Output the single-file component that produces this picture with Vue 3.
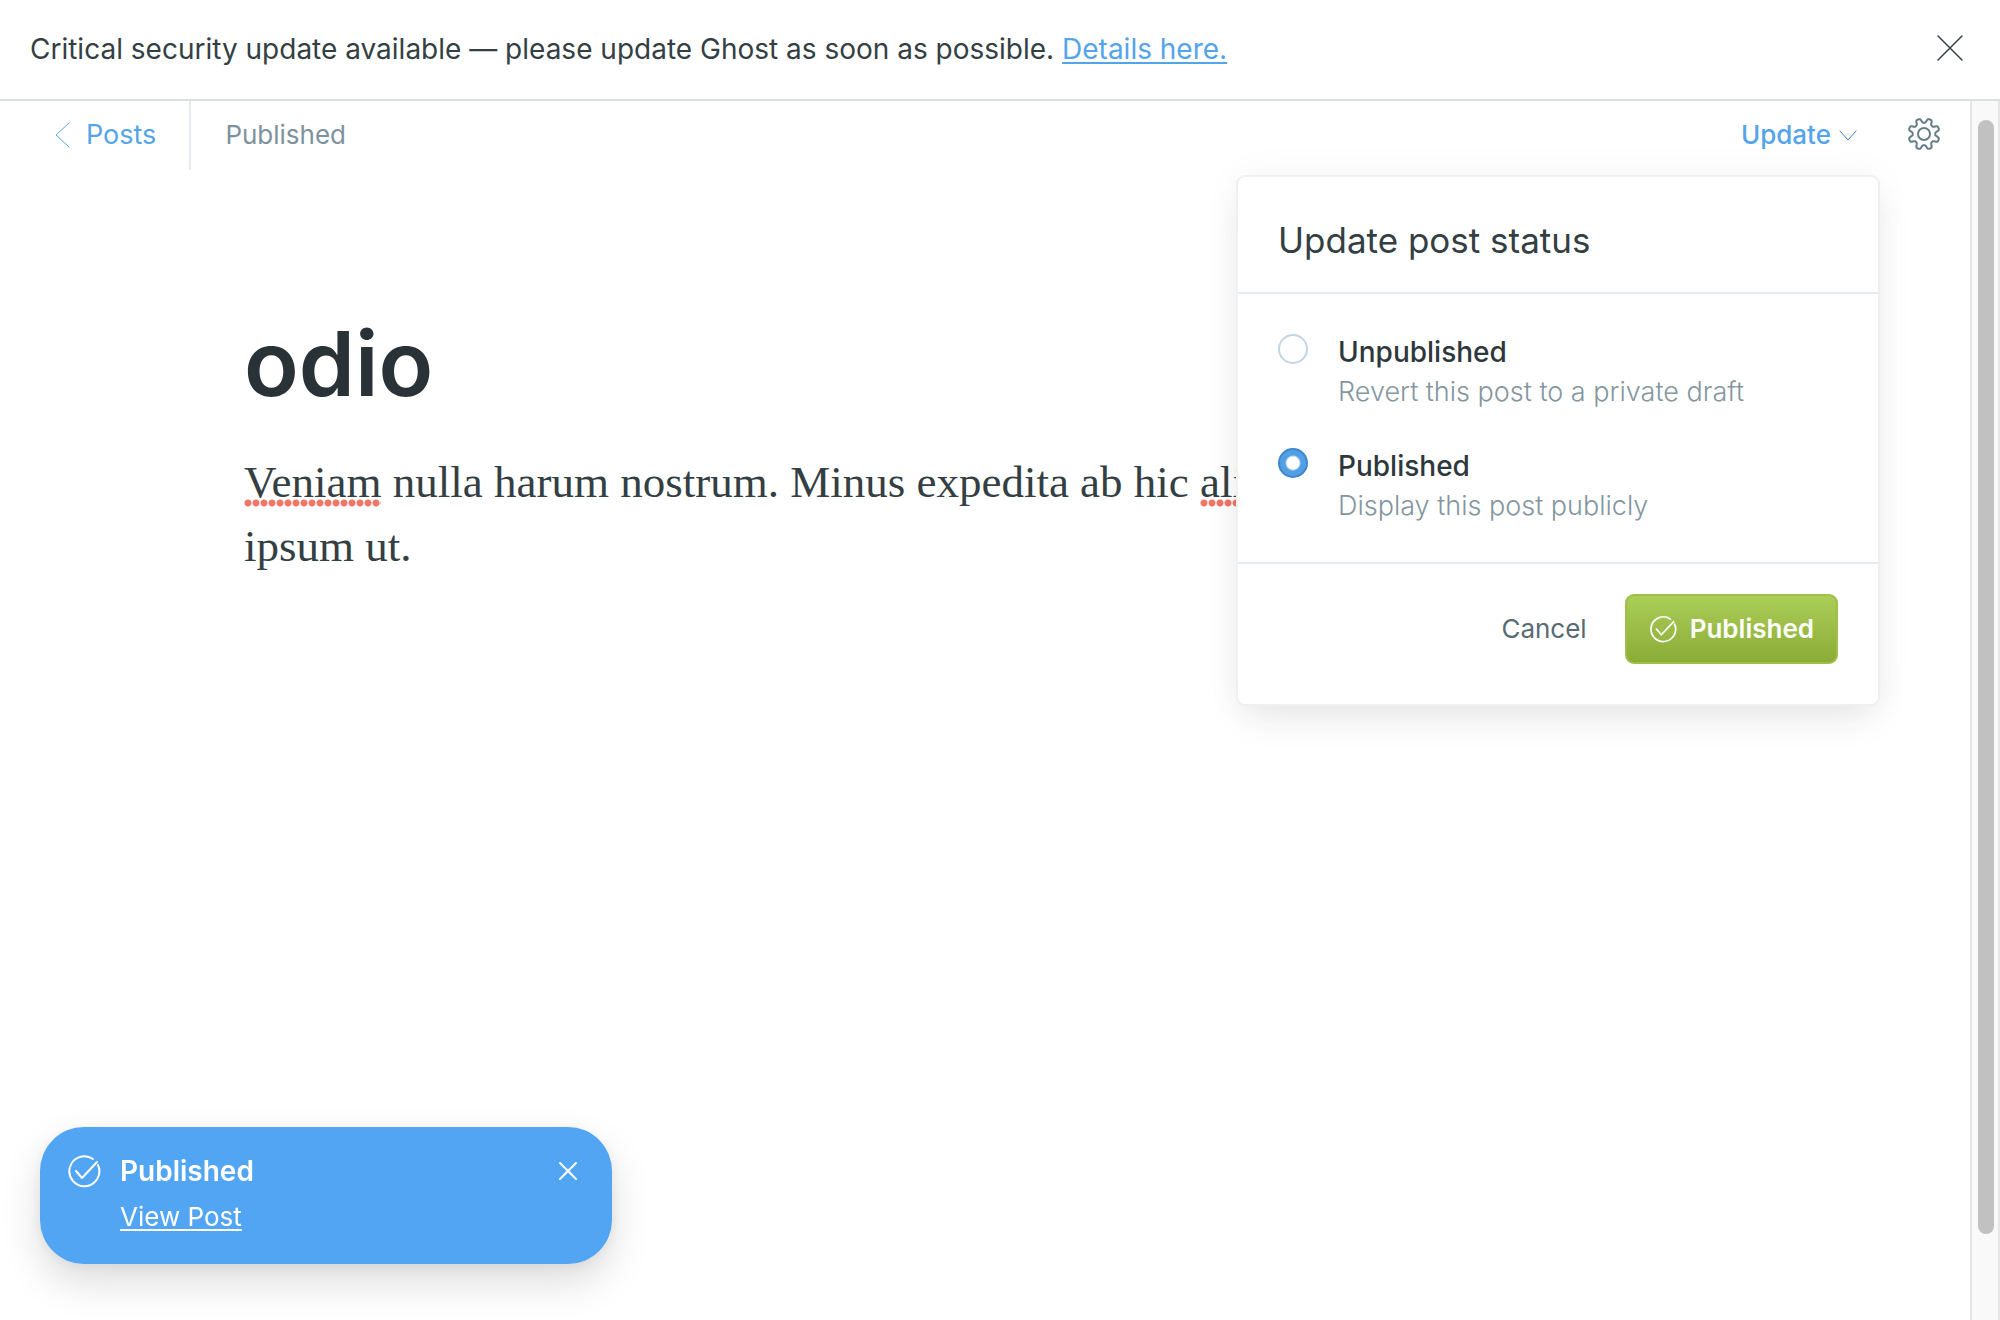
<script setup>
import { ref } from 'vue'

const status = ref('published')

const options = [
  { value: 'unpublished', title: 'Unpublished', hint: 'Revert this post to a private draft' },
  { value: 'published', title: 'Published', hint: 'Display this post publicly' }
]

// Outline of the eight-toothed settings cog, centred on the origin.
const cog = Array.from({ length: 144 }, (_, i) => {
  const angle = (i / 144) * Math.PI * 2
  const radius = 13.5 - 2.3 * Math.tanh(2 * Math.cos(8 * angle))
  const x = (radius * Math.sin(angle)).toFixed(2)
  const y = (-radius * Math.cos(angle)).toFixed(2)
  return `${i ? 'L' : 'M'}${x} ${y}`
}).join('') + 'Z'
</script>

<template>
  <div class="app">
    <aside class="banner">
      <p class="banner-text">
        Critical security update available — please update Ghost as soon as possible.
        <a href="#details">Details here.</a>
      </p>
      <button class="icon-button" type="button" aria-label="Dismiss alert">
        <svg width="26" height="26" viewBox="0 0 26 26"><path d="M1 1l24 24M25 1L1 25" /></svg>
      </button>
    </aside>

    <div class="viewport">
      <main class="editor">
        <header class="toolbar">
          <a class="back" href="#posts">
            <svg width="16" height="26" viewBox="0 0 16 26"><path d="M15 1L2 13l13 12" /></svg>
            <span>Posts</span>
          </a>
          <span class="state">Published</span>
          <div class="publish-menu">
            <button class="trigger" type="button" aria-expanded="true">
              <span>Update</span>
              <svg width="18" height="12" viewBox="0 0 18 12"><path d="M1 1l8 9 8-9" /></svg>
            </button>
            <form class="dropdown" @submit.prevent>
              <h2>Update post status</h2>
              <div class="options">
                <label v-for="o in options" :key="o.value" class="option">
                  <input v-model="status" type="radio" name="status" :value="o.value" />
                  <span class="option-text">
                    <span class="option-title">{{ o.title }}</span>
                    <span class="option-hint">{{ o.hint }}</span>
                  </span>
                </label>
              </div>
              <div class="actions">
                <button class="cancel" type="button">Cancel</button>
                <button class="confirm" type="submit">
                  <svg width="28" height="28" viewBox="0 0 34 34">
                    <path d="M26 5A15 15 0 1 0 31 11M9 17l6 7L30 8" />
                  </svg>
                  <span>Published</span>
                </button>
              </div>
            </form>
          </div>
          <button class="icon-button settings" type="button" aria-label="Post settings">
            <svg width="34" height="34" viewBox="-17 -17 34 34">
              <path :d="cog" />
              <circle r="6" />
            </svg>
          </button>
        </header>

        <article class="post">
          <h1>odio</h1>
          <p>
            <span class="misspelt">Veniam</span> nulla harum nostrum. Minus expedita ab hic
            <span class="misspelt">alias</span><br />ipsum ut.
          </p>
        </article>
      </main>
      <div class="scrollbar"><div class="thumb"></div></div>
    </div>

    <div class="toast" role="status">
      <svg class="toast-icon" width="34" height="34" viewBox="0 0 34 34">
        <path d="M26 5A15 15 0 1 0 31 11M9 17l6 7L30 8" />
      </svg>
      <div class="toast-body">
        <strong>Published</strong>
        <a href="#view">View Post</a>
      </div>
      <button class="icon-button toast-close" type="button" aria-label="Close">
        <svg width="18" height="18" viewBox="0 0 18 18"><path d="M1 1l16 16M17 1L1 17" /></svg>
      </button>
    </div>
  </div>
</template>

<style>
body {
  margin: 0;
  background: #fff;
}
</style>

<style scoped>
.app {
  display: flex;
  flex-direction: column;
  min-height: 100vh;
  font-family: Inter, "Liberation Sans", sans-serif;
  font-size: 26px;
  line-height: 36px;
  color: #343f44;
}
.app *,
.app {
  box-sizing: border-box;
}
button {
  margin: 0;
  padding: 0;
  border: 0;
  background: none;
  font: inherit;
  color: inherit;
  cursor: pointer;
}
svg {
  display: block;
  flex: none;
  fill: none;
  stroke: currentColor;
  stroke-width: 2;
  stroke-linecap: round;
  stroke-linejoin: round;
}
.banner {
  display: flex;
  align-items: flex-start;
  justify-content: space-between;
  padding: 31px 37px 32px 30px;
  border-bottom: 2px solid #dbdfdf;
}
.banner-text {
  margin: 0;
  font-size: 28px;
}
.banner-text a {
  color: #54a4ea;
  text-decoration-thickness: 2px;
  text-underline-offset: 3px;
}
.banner .icon-button {
  margin-top: 4px;
}
.banner svg {
  stroke-width: 1.5;
}
.viewport {
  display: flex;
  flex: 1;
}
.editor {
  flex: 1;
  min-width: 0;
}
.toolbar {
  display: flex;
  align-items: center;
  height: 69px;
  padding-right: 29px;
}
.back {
  display: flex;
  align-items: center;
  gap: 16px;
  height: 100%;
  padding: 0 33px 2px 54px;
  border-right: 2px solid #e3ebf1;
  color: #54a4ea;
  font-size: 27px;
  text-decoration: none;
}
.back svg {
  stroke-width: 1;
}
.state {
  padding: 0 0 2px 34px;
  color: #7d929d;
}
.publish-menu {
  position: relative;
  margin-left: auto;
  padding-bottom: 2px;
}
.trigger {
  display: flex;
  align-items: center;
  gap: 8px;
  color: #54a4ea;
  font-weight: 500;
}
.trigger svg {
  margin-top: 2px;
  color: #3d77a6;
  stroke-width: 1;
}
.settings {
  margin-left: 50px;
  padding-bottom: 3px;
  color: #667d88;
}
.dropdown {
  position: absolute;
  top: 58px;
  right: -23px;
  width: 644px;
  border: 2px solid #eef0f1;
  border-radius: 9px;
  background: #fff;
  box-shadow: 0 18px 36px -8px rgba(39, 44, 49, 0.1), 0 0 40px rgba(39, 44, 49, 0.04);
}
.dropdown h2 {
  margin: 0;
  padding: 41px 40px 30px;
  border-bottom: 2px solid #e3ebf3;
  font-size: 35px;
  line-height: 44px;
  font-weight: 400;
}
.options {
  display: flex;
  flex-direction: column;
  gap: 34px;
  padding: 38px 40px 36px;
  border-bottom: 2px solid #e3ebf3;
}
.option {
  display: flex;
  gap: 30px;
}
.option input {
  appearance: none;
  flex: none;
  width: 30px;
  height: 30px;
  margin: 2px 0 0;
  border: 2px solid #c0d5e6;
  border-radius: 50%;
  background: #fff;
}
.option input:checked {
  border-color: #3d86d2;
  background: radial-gradient(circle, #fff 6px, #529fe3 8px);
}
.option-text {
  display: flex;
  flex-direction: column;
  line-height: 40px;
}
.option-title {
  font-size: 28px;
  font-weight: 500;
  color: #2e383c;
}
.option-hint {
  font-size: 27px;
  font-weight: 300;
  color: #84969f;
}
.actions {
  display: flex;
  align-items: center;
  justify-content: flex-end;
  gap: 38px;
  padding: 30px 40px 40px;
}
.cancel {
  color: #586b75;
}
.confirm {
  display: flex;
  align-items: center;
  justify-content: center;
  gap: 13px;
  height: 70px;
  padding: 0 22px;
  border: 2px solid #9fbf47;
  border-radius: 9px;
  background: linear-gradient(#abce58, #8bad37);
  color: #fff;
  font-weight: 600;
}
.post {
  padding: 144px 40px 0 244px;
}
.post h1 {
  margin: 0 0 36px;
  font-size: 90px;
  line-height: 100px;
  font-weight: 600;
  color: #293236;
}
.post p {
  margin: 0;
  font-family: "Liberation Serif", serif;
  font-size: 45px;
  line-height: 64px;
}
.misspelt {
  background: radial-gradient(circle, #ee7768 2px, #ee7768 3px, transparent 4px) left bottom / 8px 8px repeat-x;
}
.scrollbar {
  display: flex;
  width: 30px;
  padding: 19px 4px 86px 6px;
  border: solid #e6e6e6;
  border-width: 0 2px;
  background: #f9f9f9;
}
.thumb {
  flex: 1;
  border-radius: 8px;
  background: #c1c1c1;
}
.toast {
  position: fixed;
  left: 40px;
  bottom: 56px;
  display: flex;
  align-items: flex-start;
  width: 572px;
  padding: 26px 35px 29px 27px;
  border-radius: 44px;
  background: #51a5f2;
  box-shadow: 0 18px 40px rgba(0, 0, 0, 0.14), 0 2px 14px rgba(0, 0, 0, 0.06);
  color: #fff;
}
.toast-icon {
  margin-top: 1px;
}
.toast-body {
  display: flex;
  flex: 1;
  flex-direction: column;
  align-items: flex-start;
  gap: 10px;
  margin-left: 19px;
}
.toast-body strong {
  font-size: 28px;
  font-weight: 600;
}
.toast-body a {
  color: #fff;
  text-decoration-thickness: 2px;
  text-underline-offset: 3px;
}
.toast-close {
  margin-top: 9px;
}
</style>
